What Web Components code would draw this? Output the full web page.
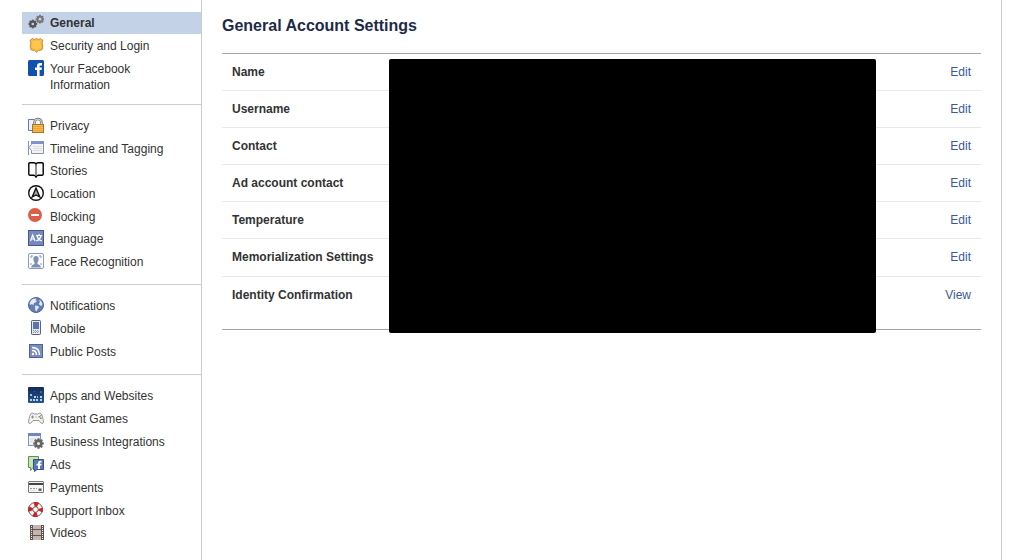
<!DOCTYPE html>
<html lang="en">
<head>
<meta charset="utf-8">
<title>General Account Settings</title>
<style>
body { margin: 0; background: #fff; font: 12px/16px "Liberation Sans", Arial, sans-serif; color: #333; }
</style>
</head>
<body>
<settings-page>
  <nav-group slot="nav" first>
    <nav-item icon="gears" current>General</nav-item>
    <nav-item icon="badge">Security and Login</nav-item>
    <nav-item icon="facebook">Your Facebook Information</nav-item>
  </nav-group>
  <nav-group slot="nav">
    <nav-item icon="lock">Privacy</nav-item>
    <nav-item icon="timeline">Timeline and Tagging</nav-item>
    <nav-item icon="book" snug>Stories</nav-item>
    <nav-item icon="location">Location</nav-item>
    <nav-item icon="block">Blocking</nav-item>
    <nav-item icon="language" snug>Language</nav-item>
    <nav-item icon="face">Face Recognition</nav-item>
  </nav-group>
  <nav-group slot="nav">
    <nav-item icon="globe">Notifications</nav-item>
    <nav-item icon="mobile">Mobile</nav-item>
    <nav-item icon="feed">Public Posts</nav-item>
  </nav-group>
  <nav-group slot="nav">
    <nav-item icon="apps">Apps and Websites</nav-item>
    <nav-item icon="gamepad">Instant Games</nav-item>
    <nav-item icon="business">Business Integrations</nav-item>
    <nav-item icon="ads">Ads</nav-item>
    <nav-item icon="card">Payments</nav-item>
    <nav-item icon="buoy">Support Inbox</nav-item>
    <nav-item icon="film" snug>Videos</nav-item>
  </nav-group>
  <page-title>General Account Settings</page-title>
  <settings-table></settings-table>
</settings-page>

<script>
const gear = (cx, cy, r, hole, w, color, bg) => {
  let teeth = '';
  for (let a = 0; a < 180; a += 45) {
    teeth += `<rect x="${cx - w / 2}" y="${cy - r}" width="${w}" height="${2 * r}" transform="rotate(${a} ${cx} ${cy})"/>`;
  }
  return `<g fill="${color}">${teeth}<circle cx="${cx}" cy="${cy}" r="${r * .8}"/></g><circle cx="${cx}" cy="${cy}" r="${hole}" fill="${bg}"/>`;
};

const icons = {
  gears: gear(4.8, 10, 4.3, 1.3, 2, '#555', '#c4d2e7') + gear(12, 5.2, 4.3, 1.4, 2, '#777', '#c4d2e7'),
  badge: `<path d="M2 3.5 4.5 1.5 6.5 2.6 8.5 1.5 10.5 2.6 12.5 1.5 15 3.5 14 6 14.8 9.5 14 12.8 10.5 13.4 8.5 15.2 6.5 13.4 3 12.8 2.2 9.5 3 6Z" fill="#fcbb42" stroke="#c98b33"/><path d="M4 4 6.5 4.2 8.5 3 10.5 4.2 13 4 12.4 6.5 13 10.5 8.5 12.7 4 10.5 4.6 6.5Z" fill="#ffc651"/>`,
  facebook: `<rect width="16" height="16" rx="1.5" fill="#0f51ad"/><path d="M9 16V10H7V7.5H9V6C9 4 10 3 12 3h2v2.4h-1.3c-.8 0-1.1.3-1.1 1V7.5H14L13.6 10H11.6v6Z" fill="#fff"/>`,
  lock: `<path d="M.5 2.5H6M.5 2.5V13.5H4" fill="none" stroke="#6479a6"/><path d="M1 3h4v10H1Z" fill="#edf0f6"/><path d="M6.5 8V5.5a3.5 3.5 0 0 1 7 0V8" fill="none" stroke="#777" stroke-width="2.6"/><path d="M6.5 8V5.5a3.5 3.5 0 0 1 7 0V8" fill="none" stroke="#ddd"/><rect x="4.5" y="7.5" width="11" height="8" fill="#f9b848" stroke="#a47427"/><path d="M5 9.5H15M5 11.5H15M5 13.5H15" stroke="#eca43a"/>`,
  timeline: `<path d="M.5 1V15M1 7.5 3.5 4.5V1.5H15.5V13.5H3.5V10.5Z" fill="#f4f4f4" stroke="#8793b2"/><path d="M3 1H16V4H3Z" fill="#7e93cb"/><path d="M5 6.5h9M5 8.5h9M5 10.5h9" stroke="#ddd"/>`,
  book: `<path d="M8 2.5C7.5 1 7 .8 6 .8H2Q.8.8.8 2V12Q.8 13.2 2 13.2H5.5Q7.3 13.2 8 15Q8.7 13.2 10.5 13.2H14Q15.2 13.2 15.2 12V2Q15.2.8 14 .8H10C9 .8 8.5 1 8 2.5Z" fill="#fff" stroke="#000" stroke-width="1.4"/><path d="M8 2V14" stroke="#777" stroke-width="1.6"/>`,
  location: `<circle cx="8" cy="8" r="7.3" fill="#fff" stroke="#111" stroke-width="1.4"/><path d="M8 3 11.8 12 8 10 4.2 12Z" fill="#aaa" stroke="#111" stroke-width="1.4"/>`,
  block: `<circle cx="7" cy="7" r="7" fill="#de5d49"/><rect x="3" y="6" width="8" height="2" fill="#fff"/>`,
  language: `<rect x=".5" y=".5" width="15" height="15" fill="#7589be" stroke="#42588f"/><path d="M2.5 11 4.7 5 7 11M3.4 9H6.2M8 5.5H14M11 4V5.5M9 6Q10 9.5 13.8 11M13 6Q12 9.5 8.2 11" fill="none" stroke="#fff" stroke-width="1.2"/>`,
  face: `<rect x=".5" y=".5" width="15" height="15" rx="1.5" fill="#fff" stroke="#8c9bb8"/><path d="M3 5V3H5M11 3h2V5M3 10v2M13 10v2" fill="none" stroke="#8295b8"/><path d="M8 3C5.8 3 5.2 4.3 5.4 6.5 5.5 8 6 9 6.5 9.5V11C5 11.8 3.5 12 3 14.5H13C12.5 12 11 11.8 9.5 11V9.5C10 9 10.5 8 10.6 6.5 10.8 4.3 10.2 3 8 3Z" fill="#7c90b8"/>`,
  globe: `<circle cx="8" cy="8" r="7.5" fill="#647eb4" stroke="#4e659a"/><path d="M2.5 4 5 1.8 8.5 1.5 7.5 3 9 4 7.5 5.5 6 6 5.5 8 3.5 7 2.5 8 1.5 7ZM7 8.5 10 9 11 10.5 9.5 12 8.5 14.5 7.5 13.5 7.2 11.5ZM11 2.5 13 4 14.5 7 13.5 9 11.5 8 11 6.5 12 5Z" fill="#e4ebf5"/>`,
  mobile: `<rect x="3.5" y=".5" width="9" height="14" rx=".7" fill="#e5e8ee" stroke="#59647a"/><rect x="5" y="2" width="6" height="7" fill="#5874b2"/><path d="M5 10.5H11M5 12.5H11" stroke="#8b98ae" stroke-dasharray="1 1"/><path d="M6 11.5H11" stroke="#9aa5b8" stroke-dasharray="1 1"/>`,
  feed: `<rect x="1.5" y="1.5" width="13" height="13" fill="#788cbd" stroke="#4c629a"/><circle cx="5" cy="11" r="1.2" fill="#fff"/><path d="M4 7.5Q8.5 7.5 8.5 12M4 4.5Q11.5 4.5 11.5 12" fill="none" stroke="#fff" stroke-width="1.5"/>`,
  apps: `<defs><linearGradient id="g" x2="0" y2="1"><stop stop-color="#142c5a"/><stop offset="1" stop-color="#28548f"/></linearGradient></defs><rect width="16" height="16" rx="1" fill="url(#g)"/><path d="M2 12h2v2H2zM5 12h2v2H5zM8 12h2v2H8zM12 12h2v2h-2zM6 9h2v2H6zM12 9h2v2h-2z" fill="#a9d7f2"/><path d="M2 7h2v2H2zM9 9h1v2H9z" fill="#8fc0e4"/><path d="M12 4h2v2h-2zM6 4h1v1H6z" fill="#42699d"/>`,
  gamepad: `<path d="M3 3.5Q5 2.5 6.3 4H9.7Q11 2.5 13 3.5 14.7 5 15.5 12 15.2 14.5 13.3 13.2L11 10.5H5L2.7 13.2Q.8 14.5.5 12 1.3 5 3 3.5Z" fill="#f2f2f2" stroke="#999"/><path d="M3 7h3M4.5 5.5v3" stroke="#888"/><path d="M7 7h2" stroke="#bbb"/><rect x="10.5" y="6" width="1.5" height="1.5" fill="#55a66f"/><rect x="12" y="5" width="1.5" height="1.5" fill="#d78b58"/><rect x="12" y="7.5" width="1.5" height="1.5" fill="#ca5959"/>`,
  business: `<rect x=".5" y=".5" width="12" height="12" fill="#f0f0f0" stroke="#8595b4"/><path d="M0 0H13V3H0Z" fill="#7088bd"/><path d="M2 6H9M2 8.5H6" stroke="#ddd"/>` + gear(10.5, 10.5, 5.3, 1.5, 2, '#666', '#eee'),
  ads: `<path d="M.5.5H10.5V11.5H5L2.5 14.5V11.5H.5Z" fill="#c8e5b4" stroke="#609049"/><path d="M5.5 3.5H15.5V13.5H9L6.5 15.5V13.5H5.5Z" fill="#5977b5" stroke="#344f8b"/><path d="M10 13V9.5H8.5V7.8H10V6.7Q10 4.7 12 4.7H13.5V6.4H12.6Q12 6.4 12 7V7.8H13.5V9.5H12V13Z" fill="#fff"/>`,
  card: `<rect x=".5" y="2.5" width="15" height="11" rx=".5" fill="#f5f5f5" stroke="#777"/><path d="M1 4H15V6H1Z" fill="#444"/><path d="M2 9.5H9" stroke="#999" stroke-dasharray="2 1"/><path d="M2 11.5H7" stroke="#ddd"/><path d="M10.5 9.5h3" stroke="#d3aa38"/><path d="M10.5 11h3" stroke="#3f65ad" stroke-width="2"/>`,
  buoy: `<circle cx="7.5" cy="7.5" r="5" fill="none" stroke="#fff" stroke-width="4"/><circle cx="7.5" cy="7.5" r="7" fill="none" stroke="#77504c"/><circle cx="7.5" cy="7.5" r="2.8" fill="#fff" stroke="#77504c"/><circle cx="7.5" cy="7.5" r="5.1" fill="none" stroke="#d02020" stroke-width="4.6" stroke-dasharray="4 4.01" stroke-dashoffset="2"/>`,
  film: `<rect x="2" y="1" width="14" height="15" fill="#62544e"/><path d="M5 1H13V5H5ZM5 6H13V11H5ZM5 12H13V16H5Z" fill="#c3b5b0"/><path d="M3.5 2V16M14.5 2V16" stroke="#eee" stroke-dasharray="1 1"/>`
};

class SettingsPage extends HTMLElement {
  constructor() {
    super();
    this.attachShadow({ mode: 'open' }).innerHTML = `
      <style>
        :host { display: flex; min-height: 100vh; box-sizing: border-box; padding: 0 10px 0 22px; }
        nav { flex: 0 0 179px; padding-top: 12px; }
        main { flex: 1; min-width: 0; padding: 16px 20px; border: solid #ccc; border-width: 0 1px; }
      </style>
      <nav aria-label="Settings"><slot name="nav"></slot></nav>
      <main><slot></slot></main>`;
  }
}

class NavGroup extends HTMLElement {
  constructor() {
    super();
    this.attachShadow({ mode: 'open' }).innerHTML = `
      <style>
        :host { display: block; padding: 10px 0 11px; border-top: 1px solid #ccc; }
        :host([first]) { padding: 0 0 8px; border: 0; }
      </style>
      <slot></slot>`;
  }
}

class NavItem extends HTMLElement {
  constructor() {
    super();
    this.attachShadow({ mode: 'open' });
  }
  connectedCallback() {
    this.shadowRoot.innerHTML = `
      <style>
        :host { display: block; margin-top: 1px; }
        :host(:first-child), :host([snug]) { margin-top: 0; }
        a { display: flex; gap: 6px; padding: 0 24px 0 6px; color: inherit; text-decoration: none; }
        svg { flex: none; width: 16px; height: 16px; margin-top: 2px; }
        span { padding: 3px 0; }
        :host([current]) a { background: #c4d2e7; font-weight: bold; }
      </style>
      <a href="#"${this.hasAttribute('current') ? ' aria-current="page"' : ''}>
        <svg viewBox="0 0 16 16" aria-hidden="true">${icons[this.getAttribute('icon')]}</svg>
        <span><slot></slot></span>
      </a>`;
  }
}

class PageTitle extends HTMLElement {
  constructor() {
    super();
    this.attachShadow({ mode: 'open' }).innerHTML = `
      <style>
        :host { display: block; margin-bottom: 17px; }
        h1 { margin: 0; font-size: 16px; line-height: 20px; color: #1d2a4a; }
      </style>
      <h1><slot></slot></h1>`;
  }
}

class SettingsTable extends HTMLElement {
  constructor() {
    super();
    const rows = [['Name', 'Edit'], ['Username', 'Edit'], ['Contact', 'Edit'], ['Ad account contact', 'Edit'],
      ['Temperature', 'Edit'], ['Memorialization Settings', 'Edit'], ['Identity Confirmation', 'View']];
    this.attachShadow({ mode: 'open' }).innerHTML = `
      <style>
        :host { display: block; position: relative; border: solid #a5a5a5; border-width: 1px 0; }
        table { width: 100%; border-spacing: 0; }
        th, td { padding: 10px; border-bottom: 1px solid #e9e9e9; vertical-align: top; }
        th { text-align: left; }
        td { text-align: right; }
        tr:nth-last-child(2) > * { padding-bottom: 11px; }
        tr:last-child > * { padding-bottom: 26px; border: 0; }
        a { color: #3b5998; text-decoration: none; }
        .cover { position: absolute; top: 5px; right: 105px; bottom: -4px; left: 167px; border-radius: 2px; background: #000; }
      </style>
      <table>${rows.map(([name, action]) => `<tr><th scope="row">${name}</th><td><a href="#" aria-label="${action} ${name}">${action}</a></td></tr>`).join('')}</table>
      <div class="cover"></div>`;
  }
}

customElements.define('settings-page', SettingsPage);
customElements.define('nav-group', NavGroup);
customElements.define('nav-item', NavItem);
customElements.define('page-title', PageTitle);
customElements.define('settings-table', SettingsTable);
</script>
</body>
</html>
